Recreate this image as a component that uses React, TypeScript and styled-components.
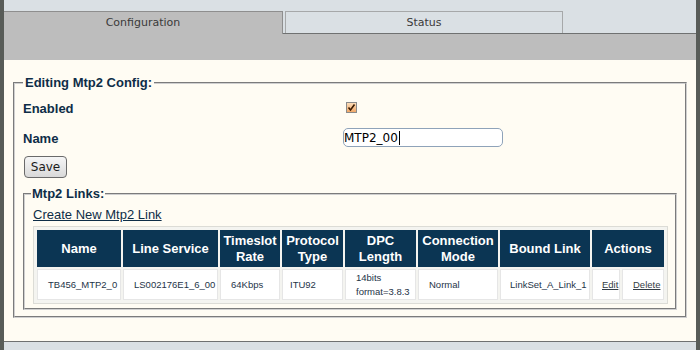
import React from "react";
import styled, { createGlobalStyle } from "styled-components";

const GlobalStyle = createGlobalStyle`
  html, body { margin: 0; padding: 0; background: #dae0e4; }
  * { box-sizing: border-box; }
`;

const Page = styled.div`
  width: 700px;
  height: 350px;
  overflow: hidden;
  border-left: 4px solid #585c58;
  border-right: 4px solid #585c58;
  background: #dae0e4;
  display: flex;
  flex-direction: column;
`;

const TabBar = styled.div`
  height: 34px;
  padding-top: 11px;
  display: flex;
  gap: 2px;
  border-bottom: 1px solid #6f7171;
  flex-shrink: 0;
`;

const Tab = styled.div<{ $active?: boolean }>`
  width: ${(p) => (p.$active ? 279 : 278)}px;
  height: ${(p) => (p.$active ? 23 : 22)}px;
  margin-bottom: ${(p) => (p.$active ? -1 : 0)}px;
  background: ${(p) => (p.$active ? "#bdbdbd" : "#dae0e4")};
  border-top: 1px solid ${(p) => (p.$active ? "#8e8e8e" : "#a6a8a9")};
  border-right: 1px solid ${(p) => (p.$active ? "#8e8e8e" : "#a6a8a9")};
  border-left: ${(p) => (p.$active ? "none" : "1px solid #a6a8a9")};
  font-family: "DejaVu Sans", sans-serif;
  font-size: 11px;
  color: #3a3a3a;
  text-align: center;
  line-height: 22px;
  position: relative;
  z-index: 1;
`;

const Band = styled.div`
  height: 26px;
  background: #bdbdbd;
  flex-shrink: 0;
`;

const Panel = styled.div`
  height: 282px;
  background: #fffcf3;
  border-bottom: 1px solid #6f7171;
  padding: 15px 9px 0 9px;
  flex-shrink: 0;
`;

const Fieldset = styled.fieldset<{ $inner?: boolean }>`
  margin: ${(p) => (p.$inner ? "8px 0 0 0" : "0")};
  min-width: 0;
  border: 2px groove #cfcfcf;
  padding: ${(p) => (p.$inner ? "6px 8px 4px 8px" : "3px 8px 6px 8px")};
`;

const Legend = styled.legend<{ $inner?: boolean }>`
  padding: 0 ${(p) => (p.$inner ? 1 : 2)}px;
  margin-left: ${(p) => (p.$inner ? -2 : 0)}px;
  font-family: "Liberation Sans", Arial, sans-serif;
  font-weight: bold;
  font-size: 13px;
  line-height: 15px;
  color: #0e2d47;
`;

const FormGrid = styled.div`
  display: grid;
  grid-template-columns: 320px 1fr;
  grid-auto-rows: 30px;
  align-items: center;
`;

const Label = styled.div`
  font-family: "Liberation Sans", Arial, sans-serif;
  font-weight: bold;
  font-size: 13px;
  color: #0e2d47;
`;

const CheckBox = styled.span`
  display: block;
  width: 11px;
  height: 11px;
  margin-left: 3px;
  margin-top: -1px;
  border: 1px solid #8a8a8a;
  background: linear-gradient(#fcdcb8, #f0a868);
  svg { display: block; }
`;

const TextField = styled.div`
  width: 160px;
  height: 19px;
  margin-top: -1px;
  border: 1px solid #8fa3b9;
  border-radius: 5px;
  background: #fff;
  padding-left: 0;
  display: flex;
  align-items: center;
  font-family: "DejaVu Sans", sans-serif;
  font-size: 12px;
  color: #000;
`;

const Caret = styled.span`
  display: inline-block;
  width: 1px;
  height: 14px;
  background: #000;
  margin-left: 1px;
`;

const SaveButton = styled.button`
  display: block;
  margin: 3px 0 0 1px;
  width: 43px;
  height: 22px;
  padding: 0;
  border: 1px solid #6a6a6a;
  border-radius: 4px;
  background: linear-gradient(#f6f6f6, #d9d9d9);
  font-family: "DejaVu Sans", sans-serif;
  font-size: 12px;
  color: #1a1a1a;
`;

const CreateLink = styled.a`
  display: block;
  font-family: "Liberation Sans", Arial, sans-serif;
  font-size: 13px;
  line-height: 16px;
  color: #0e2d47;
  text-decoration: underline;
  margin-bottom: 3px;
`;

const Table = styled.table`
  width: 100%;
  table-layout: fixed;
  border-collapse: separate;
  border-spacing: 2px;
  padding: 1px;
  border: 1px solid #dcdcd6;
  background: #f4f4f0;
`;

const Th = styled.th`
  background: #0b3553;
  color: #fff;
  font-family: "Liberation Sans", Arial, sans-serif;
  font-weight: bold;
  font-size: 13px;
  line-height: 16px;
  height: 37px;
  padding: 2px 2px;
  text-align: center;
  vertical-align: middle;
`;

const Td = styled.td<{ $pad?: number }>`
  background: #fff;
  border: 1px solid #e6e6e6;
  height: 31px;
  padding: 0 0 0 ${(p) => p.$pad ?? 10}px;
  font-family: "Liberation Sans", Arial, sans-serif;
  font-size: 9.5px;
  line-height: 14px;
  color: #1e3448;
  white-space: nowrap;
  vertical-align: middle;
`;

const ActionLink = styled.a`
  color: #333c44;
  text-decoration: underline;
`;

const colWidths = [84, 95, 60, 61, 71, 80, 90, 28, 42];

export default function App() {
  return (
    <>
      <GlobalStyle />
      <Page>
        <TabBar>
          <Tab $active>Configuration</Tab>
          <Tab>Status</Tab>
        </TabBar>
        <Band />
        <Panel>
          <Fieldset>
            <Legend>Editing Mtp2 Config:</Legend>
            <FormGrid>
              <Label>Enabled</Label>
              <div>
                <CheckBox>
                  <svg width="9" height="9" viewBox="0 0 9 9">
                    <path d="M1.5 4.5 L3.5 7 L7.5 1.5" fill="none" stroke="#3a1a00" strokeWidth="1.6" />
                  </svg>
                </CheckBox>
              </div>
              <Label>Name</Label>
              <TextField>
                MTP2_00
                <Caret />
              </TextField>
            </FormGrid>
            <SaveButton>Save</SaveButton>
            <Fieldset $inner>
              <Legend $inner>Mtp2 Links:</Legend>
              <CreateLink href="#">Create New Mtp2 Link</CreateLink>
              <Table>
                <colgroup>
                  {colWidths.map((w, i) => (
                    <col key={i} style={{ width: w }} />
                  ))}
                </colgroup>
                <thead>
                  <tr>
                    <Th>Name</Th>
                    <Th>Line Service</Th>
                    <Th>Timeslot Rate</Th>
                    <Th>Protocol Type</Th>
                    <Th>DPC Length</Th>
                    <Th>Connection Mode</Th>
                    <Th>Bound Link</Th>
                    <Th colSpan={2}>Actions</Th>
                  </tr>
                </thead>
                <tbody>
                  <tr>
                    <Td $pad={10}>TB456_MTP2_0</Td>
                    <Td $pad={10}>LS002176E1_6_00</Td>
                    <Td>64Kbps</Td>
                    <Td $pad={7}>ITU92</Td>
                    <Td>
                      14bits
                      <br />
                      format=3.8.3
                    </Td>
                    <Td>Normal</Td>
                    <Td $pad={9}>LinkSet_A_Link_1</Td>
                    <Td $pad={9}>
                      <ActionLink href="#">Edit</ActionLink>
                    </Td>
                    <Td $pad={10}>
                      <ActionLink href="#">Delete</ActionLink>
                    </Td>
                  </tr>
                </tbody>
              </Table>
            </Fieldset>
          </Fieldset>
        </Panel>
      </Page>
    </>
  );
}
